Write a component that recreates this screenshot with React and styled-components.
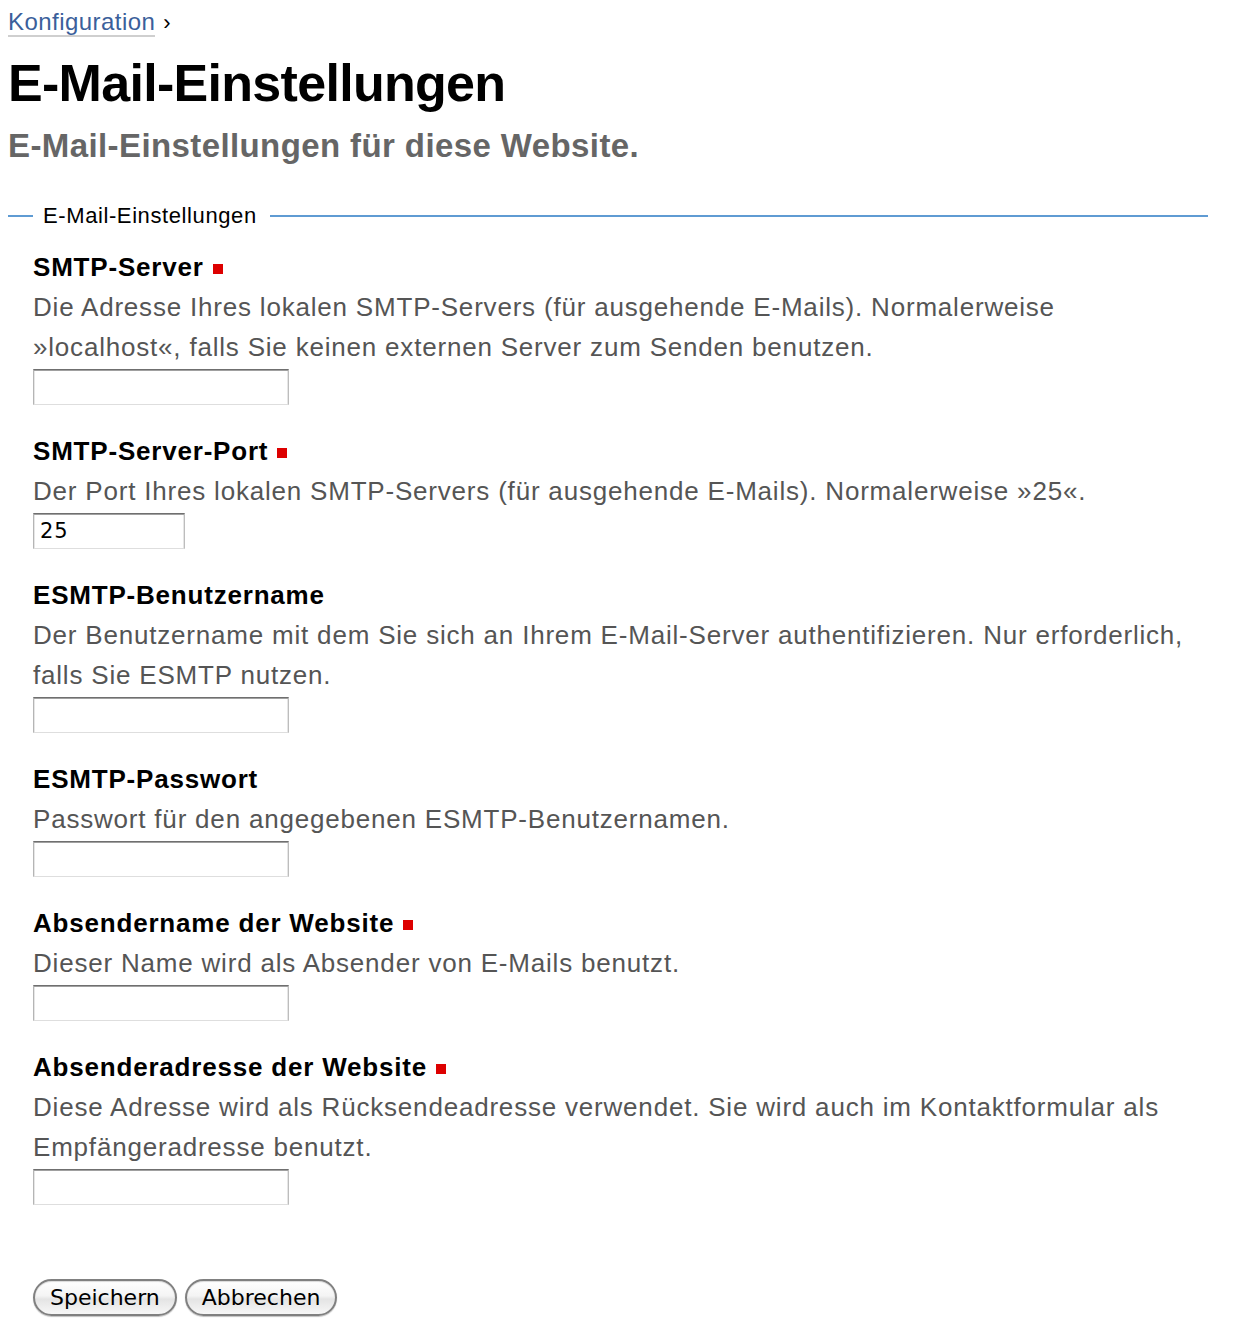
import React from "react";
import styled, { createGlobalStyle } from "styled-components";

const Global = createGlobalStyle`
  html, body { background: #fff; }
  body {
    margin: 0;
    padding: 8px 26px 20px 8px;
    font-family: "Liberation Sans", Helvetica, Arial, sans-serif;
    color: #000;
  }
`;

const Page = styled.div`
  width: 1200px;
`;

const Crumbs = styled.div`
  font-size: 24px;
  line-height: 28px;
  letter-spacing: 0.45px;
  color: #000;
`;

const CrumbLink = styled.a`
  color: #3b5f9b;
  text-decoration: none;
  border-bottom: 2px solid #cfcfcf;
`;

const Sep = styled.span`
  margin-left: 8px;
  font-size: 22px;
`;

const Title = styled.h1`
  margin: 16px 0 0;
  font-size: 52px;
  line-height: 60px;
  font-weight: bold;
  letter-spacing: -0.7px;
`;

const Subtitle = styled.h2`
  margin: 13px 0 0;
  font-size: 33px;
  line-height: 40px;
  font-weight: bold;
  color: #666;
  letter-spacing: 0.4px;
`;

const Fieldset = styled.fieldset`
  margin: 37px 0 0;
  padding: 18px 0 0 25px;
  border: none;
  border-top: 2px solid #5f9bd3;
  min-width: 0;
`;

const Legend = styled.legend`
  padding: 0 13px 0 10px;
  font-size: 22px;
  line-height: 26px;
  letter-spacing: 0.6px;
  color: #000;
`;

const Field = styled.div`
  margin-bottom: 26px;
`;

const Label = styled.label`
  display: block;
  font-size: 26px;
  line-height: 40px;
  font-weight: bold;
  letter-spacing: 0.8px;
`;

const Required = styled.span`
  display: inline-block;
  width: 10px;
  height: 10px;
  margin: 0 0 2px 9px;
  background: #dd0000;
`;

const Description = styled.div`
  font-size: 26px;
  line-height: 40px;
  color: #555;
  letter-spacing: 0.8px;
`;

const Input = styled.input`
  display: block;
  box-sizing: border-box;
  margin-top: 2px;
  width: ${(p) => p.$w || 256}px;
  height: 36px;
  padding: 0 6px;
  border: 1px solid;
  border-color: #6f6f6f #bdbdbd #dedede #b5b5b5;
  box-shadow: inset 0 1px 0 #a0a0a0, inset 1px 0 0 #e6e6e6, inset -1px 0 0 #e6e6e6;
  background: #fff;
  font-family: "DejaVu Sans", sans-serif;
  font-size: 21px;
  letter-spacing: 1px;
  color: #000;
  outline: none;
`;

const Actions = styled.div`
  display: flex;
  gap: 8px;
  margin: 48px 0 0 25px;
`;

const Button = styled.button`
  box-sizing: border-box;
  height: 37px;
  padding: 0 15px;
  border: 2px solid #808080;
  border-radius: 19px;
  background: linear-gradient(#ffffff 0%, #f4f4f4 45%, #e4e4e4 55%, #f7f7f7 100%);
  box-shadow: inset 0 1px 1px rgba(0,0,0,0.15), 0 1px 1px rgba(0,0,0,0.25);
  font-family: "DejaVu Sans", sans-serif;
  font-size: 22px;
  line-height: 30px;
  color: #000;
`;

const fields = [
  {
    label: "SMTP-Server",
    req: true,
    desc: "Die Adresse Ihres lokalen SMTP-Servers (für ausgehende E-Mails). Normalerweise »localhost«, falls Sie keinen externen Server zum Senden benutzen.",
    value: "",
  },
  {
    label: "SMTP-Server-Port",
    req: true,
    desc: "Der Port Ihres lokalen SMTP-Servers (für ausgehende E-Mails). Normalerweise »25«.",
    value: "25",
    w: 152,
  },
  {
    label: "ESMTP-Benutzername",
    desc: "Der Benutzername mit dem Sie sich an Ihrem E-Mail-Server authentifizieren. Nur erforderlich, falls Sie ESMTP nutzen.",
    value: "",
  },
  {
    label: "ESMTP-Passwort",
    desc: "Passwort für den angegebenen ESMTP-Benutzernamen.",
    value: "",
    type: "password",
  },
  {
    label: "Absendername der Website",
    req: true,
    desc: "Dieser Name wird als Absender von E-Mails benutzt.",
    value: "",
  },
  {
    label: "Absenderadresse der Website",
    req: true,
    desc: "Diese Adresse wird als Rücksendeadresse verwendet. Sie wird auch im Kontaktformular als Empfängeradresse benutzt.",
    value: "",
  },
];

export default function App() {
  return (
    <Page>
      <Global />
      <Crumbs>
        <CrumbLink href="#">Konfiguration</CrumbLink>
        <Sep>›</Sep>
      </Crumbs>
      <Title>E-Mail-Einstellungen</Title>
      <Subtitle>E-Mail-Einstellungen für diese Website.</Subtitle>
      <form onSubmit={(e) => e.preventDefault()}>
        <Fieldset>
          <Legend>E-Mail-Einstellungen</Legend>
          {fields.map((f, i) => (
            <Field key={i}>
              <Label htmlFor={"f" + i}>
                {f.label}
                {f.req && <Required />}
              </Label>
              <Description>{f.desc}</Description>
              <Input
                id={"f" + i}
                type={f.type || "text"}
                defaultValue={f.value}
                $w={f.w}
              />
            </Field>
          ))}
        </Fieldset>
        <Actions>
          <Button type="submit">Speichern</Button>
          <Button type="button">Abbrechen</Button>
        </Actions>
      </form>
    </Page>
  );
}
